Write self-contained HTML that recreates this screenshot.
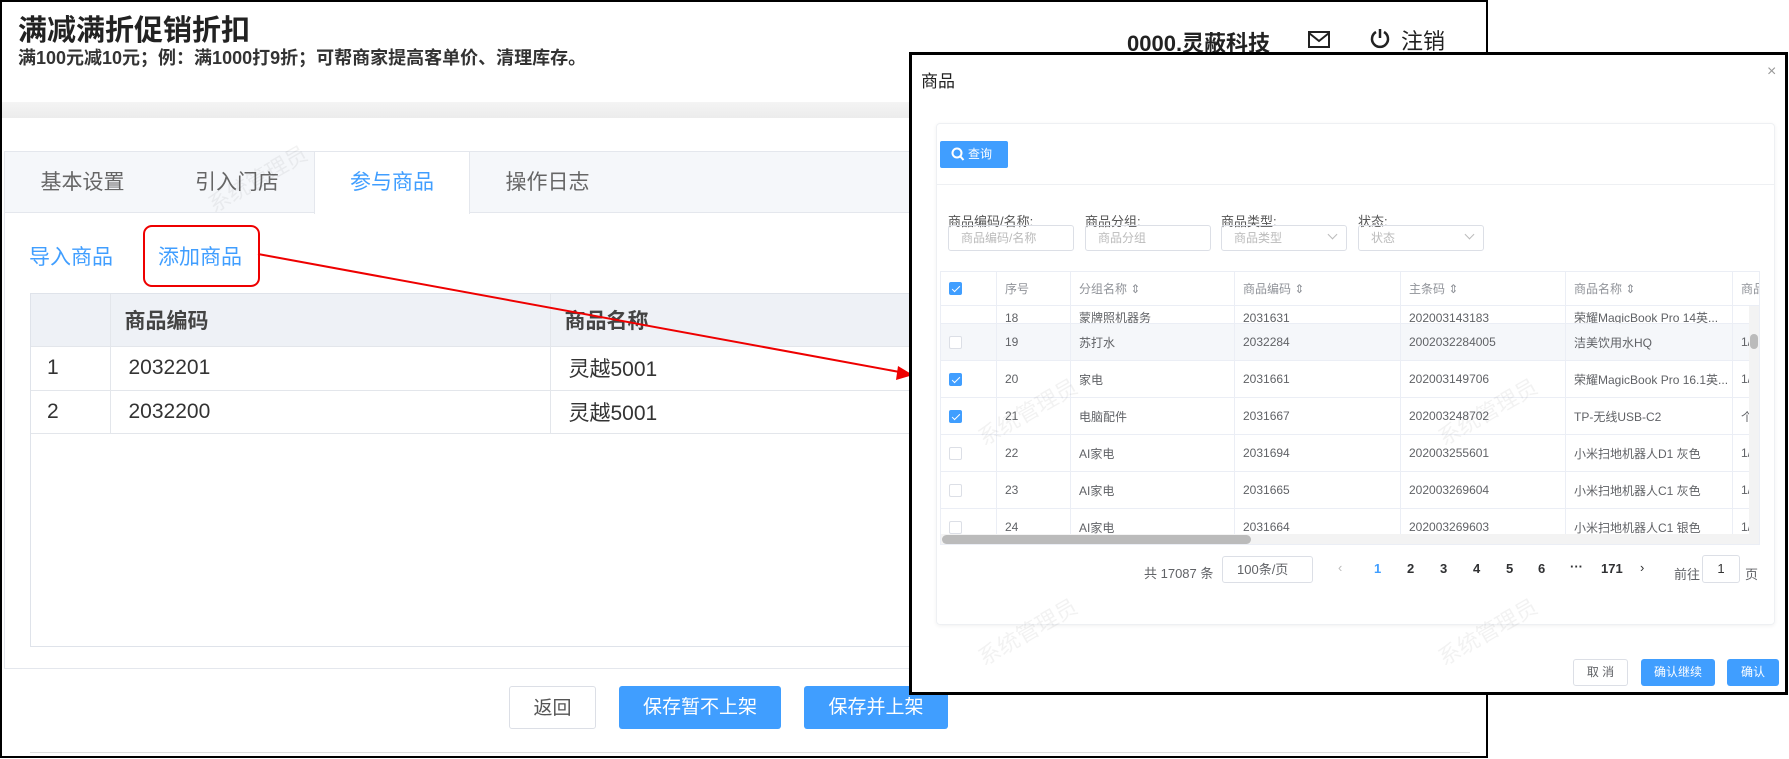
<!DOCTYPE html>
<html><head><meta charset="utf-8"><style>
*{box-sizing:border-box;margin:0;padding:0}
body{width:1789px;height:759px;background:#fff;position:relative;overflow:hidden;font-family:"Liberation Sans","Noto Sans CJK SC",sans-serif;color:#333}
.a{position:absolute}
.main{left:0;top:0;width:1488px;height:758px;border:2px solid #000;background:#fff}
.tab{position:absolute;top:0;height:61px;line-height:61px;font-size:21px;color:#666;text-align:center}
.mt td{border-right:1px solid #e3e6eb;border-bottom:1px solid #e3e6eb;font-size:21px;padding-left:16px}
.btn{position:absolute;height:43px;line-height:43px;text-align:center;font-size:19px;border-radius:3px}
.blue{background:#409eff;color:#fff}
.m{left:909px;top:52px;width:879px;height:643px;border:3px solid #000;background:#fff}
.lbl{position:absolute;top:87px;font-size:13px;color:#555}
.inp{position:absolute;top:101px;height:26px;width:126px;border:1px solid #dcdfe6;border-radius:3px;font-size:12px;color:#bbb;line-height:24px;padding-left:12px}
.inp i{position:absolute;right:10px;top:5px;width:7px;height:7px;border-right:1px solid #bbb;border-bottom:1px solid #bbb;transform:rotate(45deg)}
.row{position:absolute;left:0;width:818px;border-bottom:1px solid #ebeef5;font-size:12px;color:#606266}
.c{position:absolute;top:0;height:100%;border-right:1px solid #ebeef5;padding-left:8px;display:flex;align-items:center;white-space:nowrap;overflow:hidden}
.cb{width:13px;height:13px;border:1px solid #dcdfe6;border-radius:2px;background:#fff;position:relative}
.cb.on{background:#409eff;border-color:#409eff}
.cb.on:after{content:"";position:absolute;left:4px;top:1px;width:3px;height:7px;border:solid #fff;border-width:0 1px 1px 0;transform:rotate(45deg)}
.pg{position:absolute;top:437px;font-size:13px;font-weight:bold;color:#303133}
.wm{position:absolute;font-size:22px;color:rgba(0,0,0,0.05);transform:rotate(-30deg)}
</style></head><body>
<div class="a main">
 <div class="a" style="left:16px;top:5px;font-size:29px;font-weight:bold;color:#222">满减满折促销折扣</div>
 <div class="a" style="left:16px;top:42px;font-size:18px;font-weight:bold;color:#333">满100元减10元；例：满1000打9折；可帮商家提高客单价、清理库存。</div>
 <div class="a" style="left:1125px;top:24px;font-size:22px;font-weight:bold;color:#222">0000.灵蔽科技</div>
 <svg class="a" style="left:1306px;top:29px" width="22" height="17" viewBox="0 0 22 17"><rect x="1" y="1" width="20" height="15" fill="none" stroke="#222" stroke-width="2"/><path d="M1 2 L11 10 L21 2" fill="none" stroke="#222" stroke-width="2"/></svg>
 <svg class="a" style="left:1367px;top:25px" width="22" height="22" viewBox="0 0 22 22"><path d="M7 5 A8 8 0 1 0 15 5" fill="none" stroke="#222" stroke-width="2.5"/><path d="M11 2 V11" stroke="#222" stroke-width="2.5"/></svg>
 <div class="a" style="left:1399px;top:22px;font-size:22px;color:#222">注销</div>
 <div class="a" style="left:0;top:100px;width:1484px;height:16px;background:linear-gradient(#f4f4f4,#ececec)"></div>
 <div class="a" style="left:2px;top:149px;width:1482px;height:518px;border:1px solid #e4e7ed">
  <div class="a" style="left:0;top:0;width:1480px;height:61px;background:#f5f7fa;border-bottom:1px solid #e4e7ed"></div>
  <div class="tab" style="left:0;width:155px">基本设置</div>
  <div class="tab" style="left:155px;width:154px">引入门店</div>
  <div class="tab" style="left:309px;width:156px;background:#fff;color:#409eff;height:62px;border-left:1px solid #e4e7ed;border-right:1px solid #e4e7ed">参与商品</div>
  <div class="tab" style="left:465px;width:155px">操作日志</div>
 </div>
 <div class="a" style="left:27px;top:239px;font-size:21px;color:#409eff">导入商品</div>
 <div class="a" style="left:156px;top:239px;font-size:21px;color:#409eff">添加商品</div>
 <div class="a" style="left:141px;top:223px;width:117px;height:62px;border:2px solid #e00;border-radius:9px"></div>
 <div class="a" style="left:28px;top:291px;width:1460px;height:354px;border:1px solid #dfe3ea">
  <table class="mt" style="border-collapse:collapse;width:1460px">
   <tr style="height:52px;background:#eef1f6;font-weight:bold;color:#444"><td style="width:79px"></td><td style="width:440px;padding-left:14px">商品编码</td><td style="padding-left:14px">商品名称</td></tr>
   <tr style="height:44px"><td>1</td><td style="padding-left:18px">2032201</td><td style="padding-left:18px">灵越5001</td></tr>
   <tr style="height:43px"><td>2</td><td style="padding-left:18px">2032200</td><td style="padding-left:18px">灵越5001</td></tr>
  </table>
 </div>
 <div class="btn" style="left:507px;top:684px;width:87px;border:1px solid #dcdfe6;color:#555">返回</div>
 <div class="btn blue" style="left:617px;top:684px;width:162px">保存暂不上架</div>
 <div class="btn blue" style="left:802px;top:684px;width:144px">保存并上架</div>
 <div class="a" style="left:28px;top:750px;width:1440px;border-top:1px solid #ddd"></div>
 <div class="wm" style="left:200px;top:160px">系统管理员</div>
</div>
<svg class="a" style="left:0;top:0" width="1789" height="759"><line x1="258" y1="254" x2="905" y2="373" stroke="#e00" stroke-width="2"/><path d="M913 375 L898 366 L896 380 Z" fill="#e00"/></svg>
<div class="a m">
 <div class="a" style="left:9px;top:12px;font-size:17px;color:#222">商品</div>
 <div class="a" style="left:855px;top:8px;font-size:16px;color:#999">×</div>
 <div class="a" style="left:24px;top:68px;width:839px;height:502px;border:1px solid #eef0f3;border-radius:4px;box-shadow:0 1px 4px rgba(0,0,0,0.06)">
  <div class="a" style="left:3px;top:17px;width:68px;height:27px;background:#409eff;border-radius:2px;color:#fff;font-size:12px;line-height:27px;padding-left:28px">查询</div>
  <svg class="a" style="left:14px;top:23px" width="14" height="15" viewBox="0 0 14 15"><circle cx="6" cy="6" r="4.5" fill="none" stroke="#fff" stroke-width="2"/><path d="M9 9 L12.5 13" stroke="#fff" stroke-width="2"/></svg>
  <div class="a" style="left:0;top:60px;width:837px;border-top:1px solid #eef0f3"></div>
  <div class="lbl" style="left:11px">商品编码/名称:</div>
  <div class="lbl" style="left:148px">商品分组:</div>
  <div class="lbl" style="left:284px">商品类型:</div>
  <div class="lbl" style="left:421px">状态:</div>
  <div class="inp" style="left:11px">商品编码/名称</div>
  <div class="inp" style="left:148px">商品分组</div>
  <div class="inp" style="left:284px">商品类型<i></i></div>
  <div class="inp" style="left:421px">状态<i></i></div>
  <div class="a" style="left:3px;top:147px;width:820px;height:274px;border:1px solid #ebeef5;overflow:hidden">
   <div class="row" style="top:0;height:34px;background:#fff;color:#909399">
    <div class="c" style="left:0;width:56px;padding-left:8px"><div class="cb on" style="background:#409eff"></div></div>
    <div class="c" style="left:56px;width:74px">序号</div>
    <div class="c" style="left:130px;width:164px">分组名称 ⇕</div>
    <div class="c" style="left:294px;width:166px">商品编码 ⇕</div>
    <div class="c" style="left:460px;width:165px">主条码 ⇕</div>
    <div class="c" style="left:625px;width:167px">商品名称 ⇕</div>
    <div class="c" style="left:792px;width:40px">商品</div>
   </div>
   <div class="row" style="top:34px;height:18px;overflow:hidden">
    <div class="c" style="left:0;width:56px;align-items:flex-end"></div><div class="c" style="left:56px;width:74px;align-items:flex-end;line-height:10px">18</div><div class="c" style="left:130px;width:164px;align-items:flex-end;line-height:10px">蒙牌照机器务</div><div class="c" style="left:294px;width:166px;align-items:flex-end;line-height:10px">2031631</div><div class="c" style="left:460px;width:165px;align-items:flex-end;line-height:10px">202003143183</div><div class="c" style="left:625px;width:167px;align-items:flex-end;line-height:10px">荣耀MagicBook Pro 14英...</div><div class="c" style="left:792px;width:40px"></div>
   </div>
   <div class="row" style="top:52px;height:37px;background:#f5f7fa"><div class="c" style="left:0;width:56px"><div class="cb"></div></div><div class="c" style="left:56px;width:74px">19</div><div class="c" style="left:130px;width:164px">苏打水</div><div class="c" style="left:294px;width:166px">2032284</div><div class="c" style="left:460px;width:165px">2002032284005</div><div class="c" style="left:625px;width:167px">洁美饮用水HQ</div><div class="c" style="left:792px;width:40px">1/</div></div>
   <div class="row" style="top:89px;height:37px"><div class="c" style="left:0;width:56px"><div class="cb on"></div></div><div class="c" style="left:56px;width:74px">20</div><div class="c" style="left:130px;width:164px">家电</div><div class="c" style="left:294px;width:166px">2031661</div><div class="c" style="left:460px;width:165px">202003149706</div><div class="c" style="left:625px;width:167px">荣耀MagicBook Pro 16.1英...</div><div class="c" style="left:792px;width:40px">1/</div></div>
   <div class="row" style="top:126px;height:37px"><div class="c" style="left:0;width:56px"><div class="cb on"></div></div><div class="c" style="left:56px;width:74px">21</div><div class="c" style="left:130px;width:164px">电脑配件</div><div class="c" style="left:294px;width:166px">2031667</div><div class="c" style="left:460px;width:165px">202003248702</div><div class="c" style="left:625px;width:167px">TP-无线USB-C2</div><div class="c" style="left:792px;width:40px">个</div></div>
   <div class="row" style="top:163px;height:37px"><div class="c" style="left:0;width:56px"><div class="cb"></div></div><div class="c" style="left:56px;width:74px">22</div><div class="c" style="left:130px;width:164px">AI家电</div><div class="c" style="left:294px;width:166px">2031694</div><div class="c" style="left:460px;width:165px">202003255601</div><div class="c" style="left:625px;width:167px">小米扫地机器人D1 灰色</div><div class="c" style="left:792px;width:40px">1/</div></div>
   <div class="row" style="top:200px;height:37px"><div class="c" style="left:0;width:56px"><div class="cb"></div></div><div class="c" style="left:56px;width:74px">23</div><div class="c" style="left:130px;width:164px">AI家电</div><div class="c" style="left:294px;width:166px">2031665</div><div class="c" style="left:460px;width:165px">202003269604</div><div class="c" style="left:625px;width:167px">小米扫地机器人C1 灰色</div><div class="c" style="left:792px;width:40px">1/</div></div>
   <div class="row" style="top:237px;height:37px"><div class="c" style="left:0;width:56px"><div class="cb"></div></div><div class="c" style="left:56px;width:74px">24</div><div class="c" style="left:130px;width:164px">AI家电</div><div class="c" style="left:294px;width:166px">2031664</div><div class="c" style="left:460px;width:165px">202003269603</div><div class="c" style="left:625px;width:167px">小米扫地机器人C1 银色</div><div class="c" style="left:792px;width:40px">1/</div></div>
   <div class="a" style="left:0;top:262px;width:818px;height:10px;background:#f3f3f3"></div>
   <div class="a" style="left:1px;top:263px;width:309px;height:9px;background:#bbb;border-radius:5px"></div>
   <div class="a" style="left:808px;top:34px;width:10px;height:228px;background:#f3f3f3"></div>
   <div class="a" style="left:809px;top:62px;width:8px;height:15px;background:#bbb;border-radius:4px"></div>
  </div>
  <div class="a" style="left:207px;top:439px;font-size:13px;color:#606266">共 17087 条</div>
  <div class="a" style="left:285px;top:432px;width:91px;height:27px;border:1px solid #dcdfe6;border-radius:3px;font-size:13px;color:#606266;line-height:25px;padding-left:14px">100条/页</div>
  <div class="pg" style="left:401px;top:436px;color:#bbb;font-weight:normal">‹</div>
  <div class="pg" style="left:437px;color:#409eff">1</div>
  <div class="pg" style="left:470px">2</div>
  <div class="pg" style="left:503px">3</div>
  <div class="pg" style="left:536px">4</div>
  <div class="pg" style="left:569px">5</div>
  <div class="pg" style="left:601px">6</div>
  <div class="pg" style="left:633px;top:435px">···</div>
  <div class="pg" style="left:664px">171</div>
  <div class="pg" style="left:703px;top:436px;font-weight:normal">›</div>
  <div class="a" style="left:737px;top:440px;font-size:13px;color:#606266">前往</div>
  <div class="a" style="left:765px;top:431px;width:38px;height:28px;border:1px solid #dcdfe6;border-radius:3px;font-size:13px;text-align:center;line-height:26px">1</div>
  <div class="a" style="left:808px;top:440px;font-size:13px;color:#606266">页</div>
 </div>
 <div class="a" style="left:661px;top:604px;width:55px;height:27px;border:1px solid #dcdfe6;border-radius:3px;font-size:12px;text-align:center;line-height:25px;color:#606266">取 消</div>
 <div class="a" style="left:729px;top:604px;width:74px;height:27px;background:#409eff;border-radius:3px;font-size:12px;text-align:center;line-height:27px;color:#fff">确认继续</div>
 <div class="a" style="left:815px;top:604px;width:52px;height:27px;background:#409eff;border-radius:3px;font-size:12px;text-align:center;line-height:27px;color:#fff">确认</div>
 <div class="wm" style="left:60px;top:340px">系统管理员</div>
 <div class="wm" style="left:520px;top:340px">系统管理员</div>
 <div class="wm" style="left:60px;top:560px">系统管理员</div>
 <div class="wm" style="left:520px;top:560px">系统管理员</div>
</div>
</body></html>
